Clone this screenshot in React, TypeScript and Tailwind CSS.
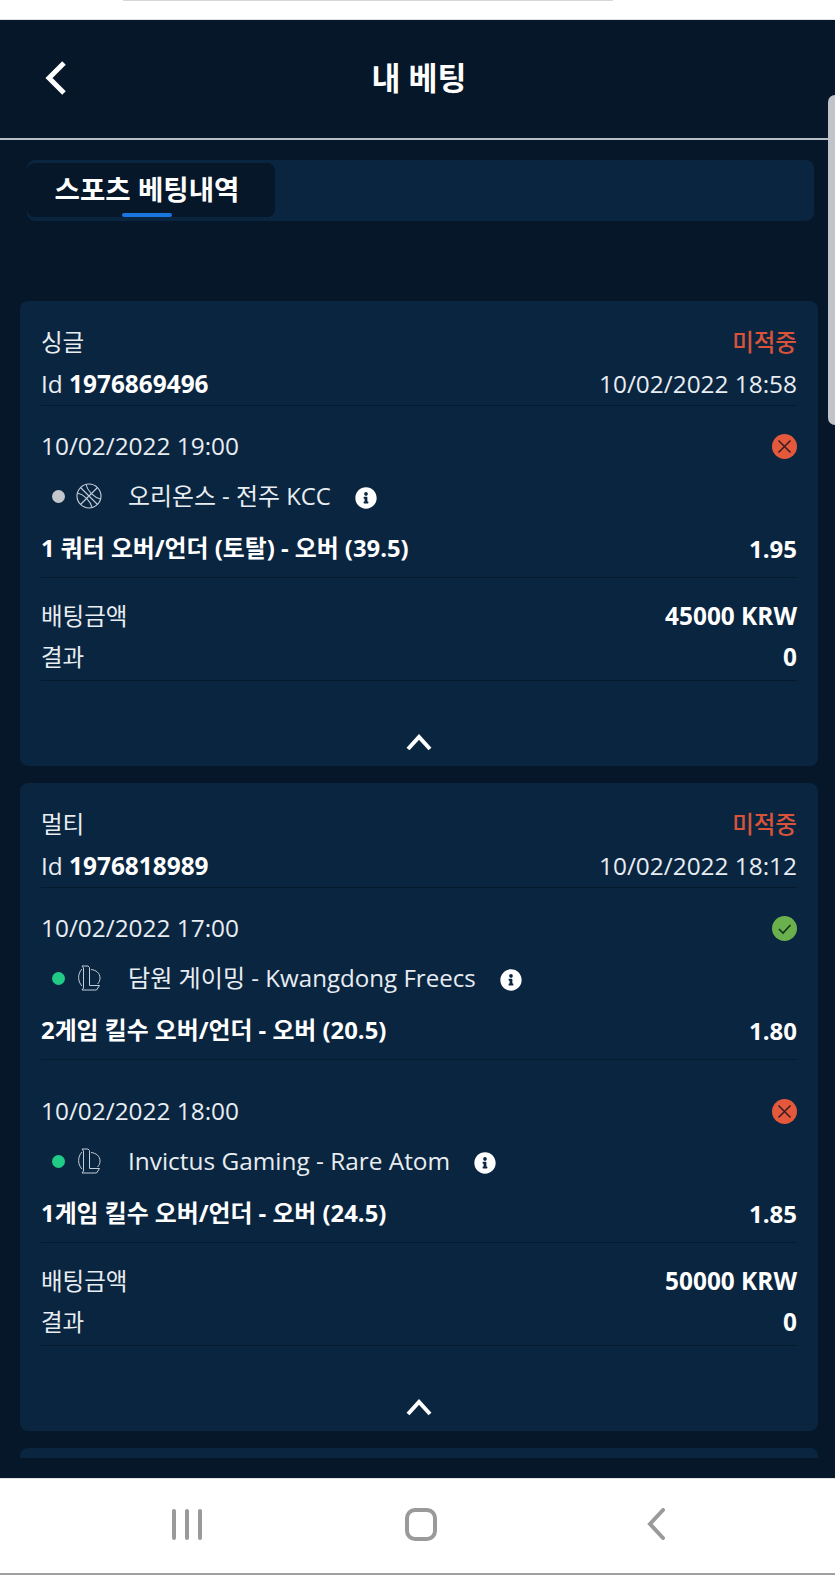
import { FaInfoCircle } from 'react-icons/fa'

type Selection = {
  date: string
  team: string
  teamSize: string
  market: string
  marketSize: string
  odds: string
  sport: 'basket' | 'lol'
  won: boolean
}

type Bet = {
  kind: string
  id: string
  placed: string
  stake: string
  selections: Selection[]
}

const bets: Bet[] = [
  {
    kind: '싱글',
    id: '1976869496',
    placed: '10/02/2022 18:58',
    stake: '45000 KRW',
    selections: [
      {
        date: '10/02/2022 19:00',
        team: '오리온스 - 전주 KCC',
        teamSize: 'text-[23.9px]',
        market: '1 쿼터 오버/언더 (토탈) - 오버 (39.5)',
        marketSize: 'text-[23.85px]',
        odds: '1.95',
        sport: 'basket',
        won: false,
      },
    ],
  },
  {
    kind: '멀티',
    id: '1976818989',
    placed: '10/02/2022 18:12',
    stake: '50000 KRW',
    selections: [
      {
        date: '10/02/2022 17:00',
        team: '담원 게이밍 - Kwangdong Freecs',
        teamSize: 'text-[24.1px]',
        market: '2게임 킬수 오버/언더 - 오버 (20.5)',
        marketSize: 'text-[23.85px]',
        odds: '1.80',
        sport: 'lol',
        won: true,
      },
      {
        date: '10/02/2022 18:00',
        team: 'Invictus Gaming - Rare Atom',
        teamSize: 'text-[24.4px]',
        market: '1게임 킬수 오버/언더 - 오버 (24.5)',
        marketSize: 'text-[23.85px]',
        odds: '1.85',
        sport: 'lol',
        won: false,
      },
    ],
  },
]

function StatusIcon({ won }: { won: boolean }) {
  if (won) {
    return (
      <svg width="25" height="25" viewBox="0 0 25 25">
        <circle cx="12.5" cy="12.5" r="12.5" fill="#6ab04c" />
        <path d="M7 13l4 4 7.5-8" fill="none" stroke="#12301f" strokeWidth="1.6" />
      </svg>
    )
  }
  return (
    <svg width="25" height="25" viewBox="0 0 25 25">
      <circle cx="12.5" cy="12.5" r="12.5" fill="#e4593b" />
      <path d="M6.5 6.5l12 12M18.5 6.5l-12 12" fill="none" stroke="#3a1d22" strokeWidth="1.6" />
    </svg>
  )
}

function BasketIcon() {
  return (
    <svg width="26" height="26" viewBox="0 0 26 26" fill="none" stroke="#c3ced8" strokeWidth="1.1">
      <circle cx="13" cy="13" r="12" />
      <path d="M4.5 4.5l17 17M21.5 4.5l-17 17" />
      <path d="M10 1.5c1.5 6.5 8 13 14.5 14.5M1.5 10c6.5 1.5 13 8 14.5 14.5" />
    </svg>
  )
}

function LolIcon() {
  return (
    <svg width="24" height="26" viewBox="0 0 24 26" fill="none" stroke="#c3ced8" strokeWidth="1">
      <path d="M5 4C.5 8.500.5 16.500 5 21" />
      <path d="M5 1h6l1.500 1.500V20.500H22.500l-3 4.500H5l1.500-2V3z" />
      <path d="M14 4.500c5 .5 9 3.500 9 8.500 0 2.500-1 4.500-2.500 6" />
    </svg>
  )
}

function SelectionBlock({ item, first }: { item: Selection; first: boolean }) {
  return (
    <div className={first ? 'border-b border-[#061a2e] pt-[20px] pb-[7px]' : 'border-b border-[#061a2e] mt-[8px] pt-[23px] pb-[7px]'}>
      <div className="flex h-[40px] items-center justify-between text-[24.4px] text-[#e8edf2]">
        <span>{item.date}</span>
        <StatusIcon won={item.won} />
      </div>
      <div className="flex h-[60px] items-center text-[#e8edf2]">
        <span className={item.sport === 'basket' ? 'ml-[11px] h-[13px] w-[13px] rounded-full bg-[#c4c7cc]' : 'ml-[11px] h-[13px] w-[13px] rounded-full bg-[#1fcb85]'} />
        <span className="ml-[11px] flex w-[26px] justify-center">
          {item.sport === 'basket' ? <BasketIcon /> : <LolIcon />}
        </span>
        <span className={`ml-[26px] ${item.teamSize}`}>{item.team}</span>
        <FaInfoCircle className="ml-[24px] mt-[4px] text-white" size={22} />
      </div>
      <div className="mt-[2px] flex h-[42px] items-center justify-between font-bold text-white">
        <span className={item.marketSize}>{item.market}</span>
        <span className="text-[24px]">{item.odds}</span>
      </div>
    </div>
  )
}

function BetCard({ bet }: { bet: Bet }) {
  return (
    <div className="rounded-lg bg-[#0a2540] px-[21px] pt-[21px]">
      <div className="flex h-[42px] items-center justify-between text-[23.5px] text-[#e8edf2]">
        <span>{bet.kind}</span>
        <span className="font-medium text-[#d8533a]">미적중</span>
      </div>
      <div className="flex h-[42px] items-center justify-between border-b border-[#061a2e] text-[24.4px] text-[#e8edf2]">
        <span>
          Id <b className="text-white">{bet.id}</b>
        </span>
        <span>{bet.placed}</span>
      </div>
      {bet.selections.map((s, i) => (
        <SelectionBlock key={s.date} item={s} first={i === 0} />
      ))}
      <div className="flex h-[53px] items-end justify-between">
        <span className="text-[23.5px] leading-[30px] text-[#e8edf2]">배팅금액</span>
        <b className="text-[24.4px] leading-[30px] text-white">{bet.stake}</b>
      </div>
      <div className="flex h-[50px] items-start justify-between border-b border-[#061a2e] pt-[11px]">
        <span className="text-[23.5px] leading-[30px] text-[#e8edf2]">결과</span>
        <b className="text-[24.4px] leading-[30px] text-white">0</b>
      </div>
      <div className="flex h-[85px] items-center justify-center pt-[36px]">
        <svg width="26" height="18" viewBox="0 0 26 18" fill="none" stroke="white" strokeWidth="4">
          <path d="M2 16L13 4l11 12" />
        </svg>
      </div>
    </div>
  )
}

export default function App() {
  return (
    <div
      className="relative flex h-[1575px] w-[835px] flex-col overflow-hidden bg-white"
      style={{ fontFamily: '"Open Sans", "Noto Sans CJK KR", sans-serif' }}
    >
      {/* status bar leftovers */}
      <div className="h-[20px] shrink-0 border-b border-[#dfe3e6]">
        <div className="mx-auto h-px w-[490px] -translate-x-[50px] bg-[#d8d8d8]" />
      </div>

      <div className="flex h-[1458px] shrink-0 flex-col bg-[#051728]">
        <header className="relative flex h-[120px] shrink-0 items-center justify-center border-b-2 border-[#b5bec4] pb-[3px] pl-[3px]">
          <svg className="absolute left-[44px] top-[40px]" width="24" height="36" viewBox="0 0 24 36" fill="none" stroke="white" strokeWidth="5">
            <path d="M20 3L5 18l15 15" />
          </svg>
          <h1 className="text-[31.5px] font-bold text-white">내 베팅</h1>
        </header>

        <div className="flex-1 overflow-hidden">
          <div className="ml-[27px] mr-[21px] mt-[20px] h-[61px] rounded-lg bg-[#0a2540] py-[3px]">
            <div className="relative flex h-[54px] w-[248px] items-center justify-center rounded-lg bg-[#051728] pb-[1px] pr-[8px]">
              <span className="text-[27.6px] font-bold text-white">스포츠 베팅내역</span>
              <span className="absolute bottom-0 left-[95px] h-[4px] w-[50px] rounded-sm bg-[#1976e0]" />
            </div>
          </div>

          <div className="ml-[20px] mr-[17px] mt-[80px] flex flex-col gap-[17px]">
            {bets.map((b) => (
              <BetCard key={b.id} bet={b} />
            ))}
            <div className="h-[40px] rounded-lg bg-[#0a2540]" />
          </div>
        </div>

        <div className="h-[20px] shrink-0" />
      </div>

      {/* android nav */}
      <nav className="flex flex-1 items-center border-t border-[#dfe3e6] border-b-2 border-b-[#a0a0a0] bg-white pb-[4px]">
        <div className="ml-[172px] flex h-[31px] w-[30px] justify-between">
          <span className="w-[4px] rounded-full bg-[#9a9a9a]" />
          <span className="w-[4px] rounded-full bg-[#9a9a9a]" />
          <span className="w-[4px] rounded-full bg-[#9a9a9a]" />
        </div>
        <div className="ml-[203px] h-[33px] w-[32px] rounded-[10px] border-[4px] border-[#9a9a9a]" />
        <svg className="ml-[208px]" width="22" height="32" viewBox="0 0 22 32" fill="none" stroke="#9a9a9a" strokeWidth="4" strokeLinecap="round">
          <path d="M18 2L5 16l13 14" />
        </svg>
      </nav>

      {/* scrollbar handle */}
      <div className="absolute right-0 top-[95px] h-[330px] w-[7px] rounded-l-lg bg-[#c0c4c8]" />
    </div>
  )
}
